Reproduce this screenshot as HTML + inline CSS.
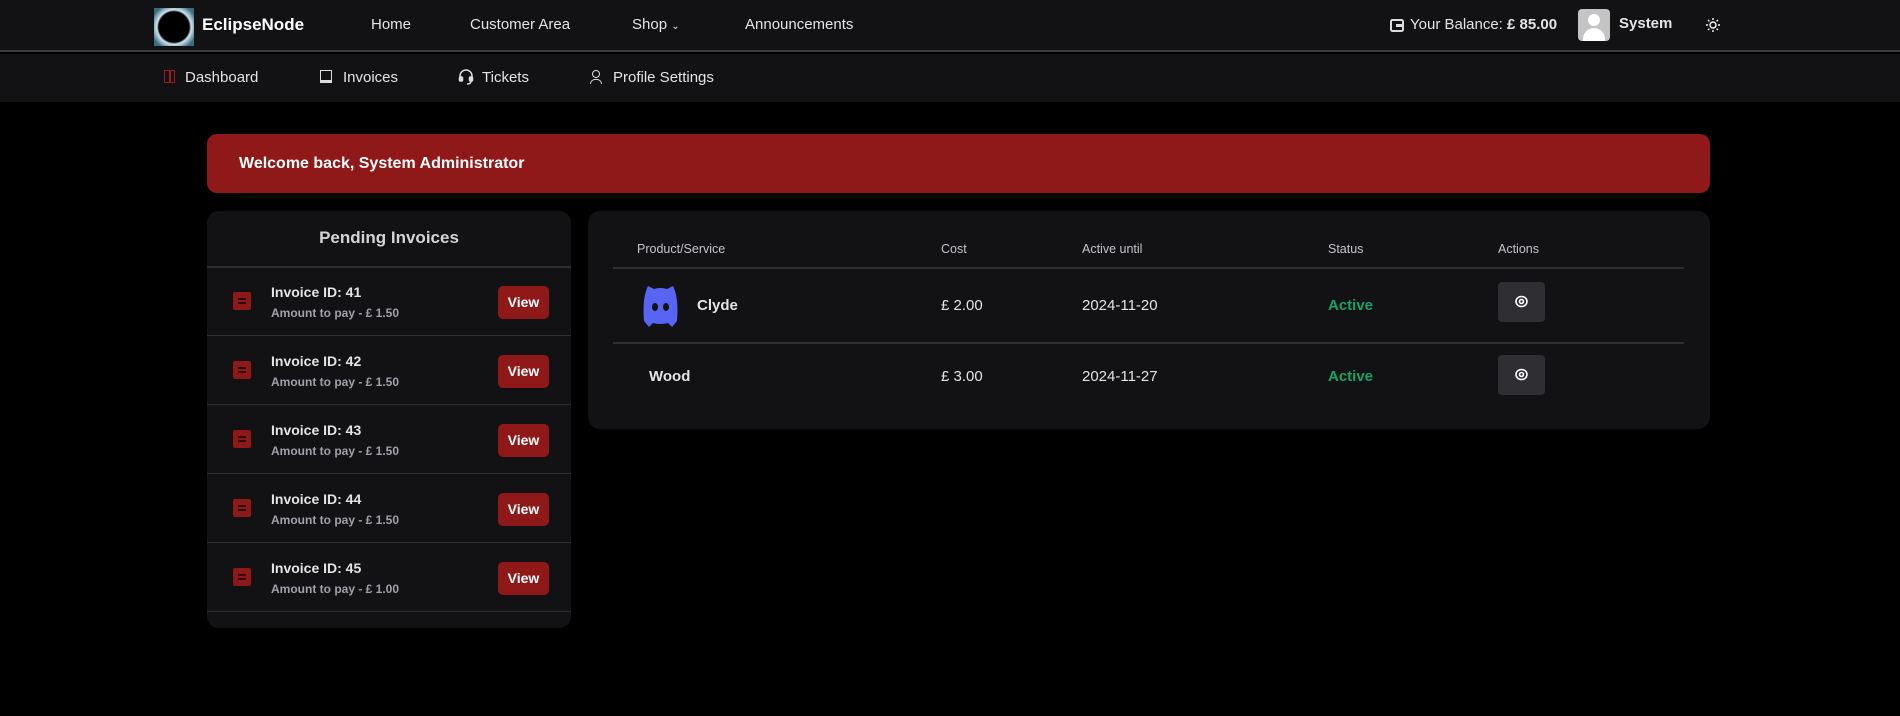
<!DOCTYPE html>
<html><head><meta charset="utf-8"><style>
*{box-sizing:border-box;margin:0;padding:0}
body{width:1900px;height:716px;background:#000;font-family:"Liberation Sans",sans-serif;color:#e4e4e7;position:relative;overflow:hidden}
.a{position:absolute;white-space:nowrap}
.top{position:absolute;left:0;top:0;width:1900px;height:52px;background:#121214;border-bottom:2px solid #3a3a3f}
.sub{position:absolute;left:0;top:54px;width:1900px;height:48px;background:#121214}
.nav{font-size:15px;color:#e4e4e7;top:16px}
.sn{font-size:15px;color:#e4e4e7;top:69px}
.card{position:absolute;background:#121214;border-radius:12px}
.hr{position:absolute;height:2px;background:#2e2e33}
.it{font-size:14px;font-weight:bold;color:#e4e4e7}
.am{font-size:12px;font-weight:bold;color:#a1a1aa}
.vb{position:absolute;left:498px;width:51px;height:33px;background:#8f1818;border-radius:5px;color:#fff;font-weight:bold;font-size:14px;text-align:center;line-height:33px}
.ic{position:absolute;left:233px;width:18px;height:18px;background:#8f1818;border-radius:2px}
.ic:before,.ic:after{content:"";position:absolute;left:5px;width:8px;height:2px;background:#2a0a0a}
.ic:before{top:6px}.ic:after{top:10px}
.th{font-size:12.5px;color:#c4c4cc;top:242px}
.td{font-size:15px;color:#e4e4e7}
.ac{font-size:15px;color:#16a36a;font-weight:bold}
.eye{position:absolute;left:1498px;width:47px;height:40px;background:#2e2e33;border-radius:4px}
</style></head><body>
<div class="top"></div><div class="sub"></div>
<div class="a" style="left:154px;top:8px;width:40px;height:38px;background:radial-gradient(circle,#000 55%,#cfe6ee 62%,#3a6b80 85%)"></div>
<div class="a" style="left:202px;top:15px;font-size:17px;font-weight:bold;color:#fff">EclipseNode</div>
<div class="a nav" style="left:371px">Home</div>
<div class="a nav" style="left:470px">Customer Area</div>
<div class="a nav" style="left:632px">Shop <span style="font-size:10px">⌄</span></div>
<div class="a nav" style="left:745px">Announcements</div>
<svg class="a" style="left:1390px;top:19px" width="14" height="13" viewBox="0 0 14 13"><rect x="1" y="1" width="12" height="11" rx="1.5" fill="none" stroke="#ddd" stroke-width="2"/><rect x="6" y="5" width="7" height="3" fill="#ddd"/></svg>
<div class="a nav" style="left:1410px">Your Balance: <b>£ 85.00</b></div>
<div class="a" style="left:1578px;top:9px;width:32px;height:32px;background:#c4c4c4;border-radius:4px;overflow:hidden"><div style="position:absolute;left:10px;top:5px;width:12px;height:12px;border-radius:50%;background:#fff"></div><div style="position:absolute;left:5px;top:19px;width:22px;height:18px;border-radius:11px 11px 0 0;background:#fff"></div></div>
<div class="a" style="left:1619px;top:15px;font-size:15px;font-weight:bold;color:#e4e4e7">System</div>
<svg class="a" style="left:1706px;top:18px" width="14" height="14" viewBox="0 0 14 14" stroke="#fff" stroke-width="1.4" fill="none"><circle cx="7" cy="7" r="3"/><path d="M7 0v2M7 12v2M0 7h2M12 7h2M2 2l1.4 1.4M10.6 10.6L12 12M2 12l1.4-1.4M10.6 3.4L12 2"/></svg>
<div class="a" style="left:164px;top:70px;width:11px;height:13px;border:1.5px solid #9b1c1c"></div>
<div class="a" style="left:169px;top:70px;width:1.5px;height:13px;background:#9b1c1c"></div>
<div class="a sn" style="left:185px">Dashboard</div>
<div class="a" style="left:320px;top:70px;width:12px;height:13px;border:1.5px solid #ddd;border-bottom-width:3px"></div>
<div class="a sn" style="left:343px">Invoices</div>
<svg class="a" style="left:458px;top:69px" width="16" height="16" viewBox="0 0 16 16" fill="none" stroke="#ddd" stroke-width="1.5"><path d="M2 9V7a6 6 0 0 1 12 0v2"/><rect x="1.5" y="8" width="3" height="4" rx="1" fill="#ddd"/><rect x="11.5" y="8" width="3" height="4" rx="1" fill="#ddd"/><path d="M13 12q0 3-4 3"/></svg>
<div class="a sn" style="left:482px">Tickets</div>
<div class="a" style="left:592px;top:70px;width:8px;height:8px;border:1.5px solid #ddd;border-radius:50%"></div>
<div class="a" style="left:590px;top:79px;width:12px;height:5px;border:1.5px solid #ddd;border-bottom:none;border-radius:6px 6px 0 0"></div>
<div class="a sn" style="left:613px">Profile Settings</div>

<div class="a" style="left:207px;top:134px;width:1503px;height:59px;background:#8f1818;border-radius:10px"></div>
<div class="a" style="left:239px;top:155px;font-size:16px;font-weight:bold;color:#fff">Welcome back, System Administrator</div>

<div class="card" style="left:207px;top:211px;width:364px;height:417px"></div>
<div class="a" style="left:207px;width:364px;top:228px;text-align:center;font-size:17px;font-weight:bold;color:#d4d4d8">Pending Invoices</div>
<div class="hr" style="left:207px;width:364px;top:266px"></div>
<div class="hr" style="left:207px;width:364px;top:335px;height:1px"></div>
<div class="hr" style="left:207px;width:364px;top:404px;height:1px"></div>
<div class="hr" style="left:207px;width:364px;top:473px;height:1px"></div>
<div class="hr" style="left:207px;width:364px;top:542px;height:1px"></div>
<div class="hr" style="left:207px;width:364px;top:611px;height:1px"></div>

<div class="ic" style="top:292px"></div><div class="a it" style="left:271px;top:284px">Invoice ID: 41</div><div class="a am" style="left:271px;top:306px">Amount to pay - £ 1.50</div><div class="vb" style="top:286px">View</div>
<div class="ic" style="top:361px"></div><div class="a it" style="left:271px;top:353px">Invoice ID: 42</div><div class="a am" style="left:271px;top:375px">Amount to pay - £ 1.50</div><div class="vb" style="top:355px">View</div>
<div class="ic" style="top:430px"></div><div class="a it" style="left:271px;top:422px">Invoice ID: 43</div><div class="a am" style="left:271px;top:444px">Amount to pay - £ 1.50</div><div class="vb" style="top:424px">View</div>
<div class="ic" style="top:499px"></div><div class="a it" style="left:271px;top:491px">Invoice ID: 44</div><div class="a am" style="left:271px;top:513px">Amount to pay - £ 1.50</div><div class="vb" style="top:493px">View</div>
<div class="ic" style="top:568px"></div><div class="a it" style="left:271px;top:560px">Invoice ID: 45</div><div class="a am" style="left:271px;top:582px">Amount to pay - £ 1.00</div><div class="vb" style="top:562px">View</div>

<div class="card" style="left:588px;top:211px;width:1122px;height:218px"></div>
<div class="a th" style="left:637px">Product/Service</div>
<div class="a th" style="left:941px">Cost</div>
<div class="a th" style="left:1082px">Active until</div>
<div class="a th" style="left:1328px">Status</div>
<div class="a th" style="left:1498px">Actions</div>
<div class="hr" style="left:613px;width:1071px;top:267px"></div>
<div class="hr" style="left:613px;width:1071px;top:342px"></div>
<svg class="a" style="left:642px;top:283px" width="37" height="45" viewBox="0 0 37 45"><path d="M6 3 L12 6 Q18 4 25 6 L31 3 Q37 15 35 38 L30 44 L26 40 Q18 42 11 40 L7 44 L2 38 Q0 15 6 3Z" fill="#5865f2"/><ellipse cx="13" cy="24" rx="3" ry="4" fill="#121214"/><ellipse cx="24" cy="24" rx="3" ry="4" fill="#121214"/></svg>
<div class="a td" style="left:697px;top:297px;font-weight:bold">Clyde</div>
<div class="a td" style="left:941px;top:297px">£ 2.00</div>
<div class="a td" style="left:1082px;top:297px">2024-11-20</div>
<div class="a ac" style="left:1328px;top:297px">Active</div>
<div class="eye" style="top:282px"></div>
<svg class="a" style="left:1514px;top:295px" width="15" height="13" viewBox="0 0 15 13" fill="none" stroke="#fff" stroke-width="1.6"><ellipse cx="7.5" cy="6.5" rx="5.5" ry="5"/><circle cx="7.5" cy="6.5" r="2"/></svg>
<div class="a td" style="left:649px;top:368px;font-weight:bold">Wood</div>
<div class="a td" style="left:941px;top:368px">£ 3.00</div>
<div class="a td" style="left:1082px;top:368px">2024-11-27</div>
<div class="a ac" style="left:1328px;top:368px">Active</div>
<div class="eye" style="top:355px"></div>
<svg class="a" style="left:1514px;top:368px" width="15" height="13" viewBox="0 0 15 13" fill="none" stroke="#fff" stroke-width="1.6"><ellipse cx="7.5" cy="6.5" rx="5.5" ry="5"/><circle cx="7.5" cy="6.5" r="2"/></svg>
</body></html>
